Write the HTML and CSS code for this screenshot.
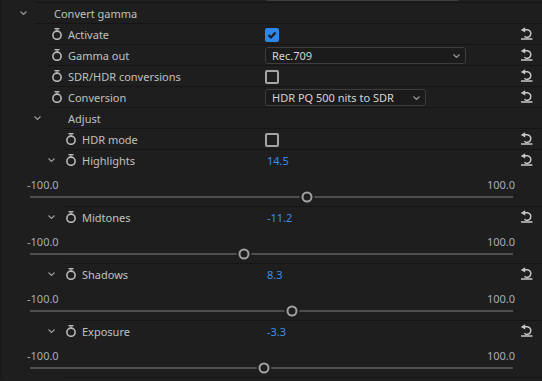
FILE: index.html
```html
<!DOCTYPE html>
<html lang="en">
<head>
  <meta charset="UTF-8" />
  <meta name="viewport" content="width=device-width, initial-scale=1.0">
  <title>Convert gamma</title>
  <link rel="stylesheet" href="styles.css">
</head>
<body>

  <div class="panel">

    <!-- row above, scrolled mostly out of view -->
    <div class="row cut l35">
      <div class="name n2"></div>
      <div class="ctrl"><div class="select s-top"><span></span></div></div>
      <div class="reset"></div>
    </div>

    <div class="row l35">
      <div class="name n1">
        <svg class="chev" width="7" height="4" viewBox="0 0 7 4"><polyline points="0.5,0.5 3.5,3.5 6.5,0.5"/></svg>
        <span class="label">Convert gamma</span>
      </div>
      <div class="ctrl"></div>
      <div class="reset"></div>
    </div>

    <div class="row l48">
      <div class="name n2">
        <svg class="watch" width="12" height="12" viewBox="0 0 12 12"><rect x="3.5" y="0" width="5" height="1.4"/><rect x="5.3" y="1.4" width="1.4" height="1.6"/><circle cx="6" cy="7.2" r="4.1"/></svg>
        <span class="label">Activate</span>
      </div>
      <div class="ctrl">
        <span class="check on"><svg width="14" height="14" viewBox="0 0 14 14"><polyline points="3.5,7 6,9.5 10.5,4.5"/></svg></span>
      </div>
      <div class="reset"><svg width="13" height="13" viewBox="0 0 13 13"><polygon points="0.8,3 5.2,0.2 5.2,5.6"/><path d="M5 2.8 H7.4 A3.8 3.8 0 1 1 4.4 9.3"/><line x1="1" y1="12" x2="12.5" y2="12"/></svg></div>
    </div>

    <div class="row l48">
      <div class="name n2">
        <svg class="watch" width="12" height="12" viewBox="0 0 12 12"><rect x="3.5" y="0" width="5" height="1.4"/><rect x="5.3" y="1.4" width="1.4" height="1.6"/><circle cx="6" cy="7.2" r="4.1"/></svg>
        <span class="label">Gamma out</span>
      </div>
      <div class="ctrl">
        <div class="select s-gamma">
          <span>Rec.709</span>
          <svg class="chev" width="7" height="4" viewBox="0 0 7 4"><polyline points="0.5,0.5 3.5,3.5 6.5,0.5"/></svg>
        </div>
      </div>
      <div class="reset"><svg width="13" height="13" viewBox="0 0 13 13"><polygon points="0.8,3 5.2,0.2 5.2,5.6"/><path d="M5 2.8 H7.4 A3.8 3.8 0 1 1 4.4 9.3"/><line x1="1" y1="12" x2="12.5" y2="12"/></svg></div>
    </div>

    <div class="row l48">
      <div class="name n2">
        <svg class="watch" width="12" height="12" viewBox="0 0 12 12"><rect x="3.5" y="0" width="5" height="1.4"/><rect x="5.3" y="1.4" width="1.4" height="1.6"/><circle cx="6" cy="7.2" r="4.1"/></svg>
        <span class="label">SDR/HDR conversions</span>
      </div>
      <div class="ctrl"><span class="check"></span></div>
      <div class="reset"><svg width="13" height="13" viewBox="0 0 13 13"><polygon points="0.8,3 5.2,0.2 5.2,5.6"/><path d="M5 2.8 H7.4 A3.8 3.8 0 1 1 4.4 9.3"/><line x1="1" y1="12" x2="12.5" y2="12"/></svg></div>
    </div>

    <div class="row l48">
      <div class="name n2">
        <svg class="watch" width="12" height="12" viewBox="0 0 12 12"><rect x="3.5" y="0" width="5" height="1.4"/><rect x="5.3" y="1.4" width="1.4" height="1.6"/><circle cx="6" cy="7.2" r="4.1"/></svg>
        <span class="label">Conversion</span>
      </div>
      <div class="ctrl">
        <div class="select s-conv">
          <span>HDR PQ 500 nits to SDR</span>
          <svg class="chev" width="7" height="4" viewBox="0 0 7 4"><polyline points="0.5,0.5 3.5,3.5 6.5,0.5"/></svg>
        </div>
      </div>
      <div class="reset"><svg width="13" height="13" viewBox="0 0 13 13"><polygon points="0.8,3 5.2,0.2 5.2,5.6"/><path d="M5 2.8 H7.4 A3.8 3.8 0 1 1 4.4 9.3"/><line x1="1" y1="12" x2="12.5" y2="12"/></svg></div>
    </div>

    <div class="row l63">
      <div class="name n2g">
        <svg class="chev" width="7" height="4" viewBox="0 0 7 4"><polyline points="0.5,0.5 3.5,3.5 6.5,0.5"/></svg>
        <span class="label">Adjust</span>
      </div>
      <div class="ctrl"></div>
      <div class="reset"></div>
    </div>

    <div class="row l63">
      <div class="name n3">
        <svg class="watch" width="12" height="12" viewBox="0 0 12 12"><rect x="3.5" y="0" width="5" height="1.4"/><rect x="5.3" y="1.4" width="1.4" height="1.6"/><circle cx="6" cy="7.2" r="4.1"/></svg>
        <span class="label">HDR mode</span>
      </div>
      <div class="ctrl"><span class="check"></span></div>
      <div class="reset"><svg width="13" height="13" viewBox="0 0 13 13"><polygon points="0.8,3 5.2,0.2 5.2,5.6"/><path d="M5 2.8 H7.4 A3.8 3.8 0 1 1 4.4 9.3"/><line x1="1" y1="12" x2="12.5" y2="12"/></svg></div>
    </div>

    <div class="slider l63">
      <div class="row head">
        <div class="name n3g">
          <svg class="chev" width="7" height="4" viewBox="0 0 7 4"><polyline points="0.5,0.5 3.5,3.5 6.5,0.5"/></svg>
          <svg class="watch" width="12" height="12" viewBox="0 0 12 12"><rect x="3.5" y="0" width="5" height="1.4"/><rect x="5.3" y="1.4" width="1.4" height="1.6"/><circle cx="6" cy="7.2" r="4.1"/></svg>
          <span class="label">Highlights</span>
        </div>
        <div class="ctrl"><span class="value">14.5</span></div>
        <div class="reset"><svg width="13" height="13" viewBox="0 0 13 13"><polygon points="0.8,3 5.2,0.2 5.2,5.6"/><path d="M5 2.8 H7.4 A3.8 3.8 0 1 1 4.4 9.3"/><line x1="1" y1="12" x2="12.5" y2="12"/></svg></div>
      </div>
      <div class="scale"><span>-100.0</span><span>100.0</span></div>
      <div class="track-wrap"><div class="track"><span class="thumb" style="left: 57.25%"></span></div></div>
    </div>

    <div class="slider l63">
      <div class="row head">
        <div class="name n3g">
          <svg class="chev" width="7" height="4" viewBox="0 0 7 4"><polyline points="0.5,0.5 3.5,3.5 6.5,0.5"/></svg>
          <svg class="watch" width="12" height="12" viewBox="0 0 12 12"><rect x="3.5" y="0" width="5" height="1.4"/><rect x="5.3" y="1.4" width="1.4" height="1.6"/><circle cx="6" cy="7.2" r="4.1"/></svg>
          <span class="label">Midtones</span>
        </div>
        <div class="ctrl"><span class="value">-11.2</span></div>
        <div class="reset"><svg width="13" height="13" viewBox="0 0 13 13"><polygon points="0.8,3 5.2,0.2 5.2,5.6"/><path d="M5 2.8 H7.4 A3.8 3.8 0 1 1 4.4 9.3"/><line x1="1" y1="12" x2="12.5" y2="12"/></svg></div>
      </div>
      <div class="scale"><span>-100.0</span><span>100.0</span></div>
      <div class="track-wrap"><div class="track"><span class="thumb" style="left: 44.4%"></span></div></div>
    </div>

    <div class="slider l63">
      <div class="row head">
        <div class="name n3g">
          <svg class="chev" width="7" height="4" viewBox="0 0 7 4"><polyline points="0.5,0.5 3.5,3.5 6.5,0.5"/></svg>
          <svg class="watch" width="12" height="12" viewBox="0 0 12 12"><rect x="3.5" y="0" width="5" height="1.4"/><rect x="5.3" y="1.4" width="1.4" height="1.6"/><circle cx="6" cy="7.2" r="4.1"/></svg>
          <span class="label">Shadows</span>
        </div>
        <div class="ctrl"><span class="value">8.3</span></div>
        <div class="reset"><svg width="13" height="13" viewBox="0 0 13 13"><polygon points="0.8,3 5.2,0.2 5.2,5.6"/><path d="M5 2.8 H7.4 A3.8 3.8 0 1 1 4.4 9.3"/><line x1="1" y1="12" x2="12.5" y2="12"/></svg></div>
      </div>
      <div class="scale"><span>-100.0</span><span>100.0</span></div>
      <div class="track-wrap"><div class="track"><span class="thumb" style="left: 54.15%"></span></div></div>
    </div>

    <div class="slider l63">
      <div class="row head">
        <div class="name n3g">
          <svg class="chev" width="7" height="4" viewBox="0 0 7 4"><polyline points="0.5,0.5 3.5,3.5 6.5,0.5"/></svg>
          <svg class="watch" width="12" height="12" viewBox="0 0 12 12"><rect x="3.5" y="0" width="5" height="1.4"/><rect x="5.3" y="1.4" width="1.4" height="1.6"/><circle cx="6" cy="7.2" r="4.1"/></svg>
          <span class="label">Exposure</span>
        </div>
        <div class="ctrl"><span class="value">-3.3</span></div>
        <div class="reset"><svg width="13" height="13" viewBox="0 0 13 13"><polygon points="0.8,3 5.2,0.2 5.2,5.6"/><path d="M5 2.8 H7.4 A3.8 3.8 0 1 1 4.4 9.3"/><line x1="1" y1="12" x2="12.5" y2="12"/></svg></div>
      </div>
      <div class="scale"><span>-100.0</span><span>100.0</span></div>
      <div class="track-wrap"><div class="track"><span class="thumb" style="left: 48.35%"></span></div></div>
    </div>

  </div>

</body>
</html>
```

FILE: styles.css
```css
body {
  margin: 0;
  background: #1e1e1e;
  font-family: "Noto Sans", "Open Sans", sans-serif;
  font-size: 11px;
  color: #bdbdbd;
  overflow: hidden;
}

.panel {
  border-left: 2px solid #191919;
  min-height: 381px;
}

/* every row / group draws its separator at the bottom, starting at its indent */
.row,
.slider {
  box-sizing: border-box;
  background-image: linear-gradient(#151515, #151515);
  background-repeat: no-repeat;
  background-size: 100% 1px;
}

.l35 { background-position: 33px 100%; }
.l48 { background-position: 46px 100%; }
.l63 { background-position: 61px 100%; }

.row {
  height: 21px;
  padding: 0 9px 1px 0;
  display: grid;
  grid-template-columns: 263px 1fr 13px;
  align-items: center;
}

.row.cut {
  margin-top: -18px;
}

.slider {
  height: 57px;
  padding-bottom: 1px;
}

.slider .row.head {
  height: 20px;
  padding-bottom: 0;
  background: none;
}

.name {
  display: flex;
  align-items: center;
  height: 20px;
  white-space: nowrap;
}

.n1 { padding-left: 18px; }
.n1 .chev { margin-right: 27px; }
.n2 { padding-left: 49px; }
.n2g { padding-left: 32px; }
.n2g .chev { margin-right: 27px; }
.n3 { padding-left: 63px; }
.n3g { padding-left: 46px; }
.n3g .chev { margin-right: 10px; }

.chev polyline {
  fill: none;
  stroke: #9c9c9c;
  stroke-width: 1.1;
}

.watch {
  margin-right: 5px;
  flex: none;
}

.watch rect { fill: #b8b8b8; }
.watch circle {
  fill: none;
  stroke: #b8b8b8;
  stroke-width: 1.6;
}

.label {
  color: #c0c0c0;
}

.ctrl {
  display: flex;
  align-items: center;
  height: 20px;
}

.check {
  box-sizing: border-box;
  width: 14px;
  height: 14px;
  border: 2px solid #a4a4a4;
  border-radius: 2px;
  align-self: flex-start;
  margin-top: 4px;
}

.check.on {
  border: none;
  background: #2d86e8;
}

.check svg { display: block; }
.check polyline {
  fill: none;
  stroke: #1a1a1a;
  stroke-width: 2;
}

.select {
  box-sizing: border-box;
  height: 17px;
  border: 1px solid #3d3d3d;
  border-radius: 3px;
  background: #1b1b1b;
  display: flex;
  align-items: center;
  justify-content: space-between;
  padding: 0 5px 0 6px;
  color: #d4d4d4;
  align-self: flex-start;
  margin-top: 2px;
}

.s-top { width: 195px; }
.s-gamma { width: 201px; }
.s-conv { width: 161px; }

.value {
  padding-left: 2px;
  color: #3a8ee8;
}

.reset {
  align-self: start;
  margin-top: 3px;
  height: 13px;
}

.reset svg { display: block; }
.reset polygon { fill: #c8c8c8; }
.reset path,
.reset line {
  fill: none;
  stroke: #c8c8c8;
  stroke-width: 1.5;
}

.scale {
  box-sizing: border-box;
  height: 22px;
  padding: 8px 27px 0 25px;
  line-height: 14px;
  display: flex;
  justify-content: space-between;
  color: #a8adb4;
}

.track-wrap {
  height: 14px;
  padding-top: 4px;
  box-sizing: border-box;
}

.track {
  position: relative;
  height: 2px;
  margin: 0 29px 0 28px;
  background: #4e4e4e;
}

.thumb {
  position: absolute;
  top: 1px;
  width: 11px;
  height: 11px;
  box-sizing: border-box;
  border: 2px solid #a2a2a2;
  border-radius: 50%;
  background: #1e1e1e;
  box-shadow: 0 0 0 2px #1e1e1e;
  transform: translate(-50%, -50%);
}
```
